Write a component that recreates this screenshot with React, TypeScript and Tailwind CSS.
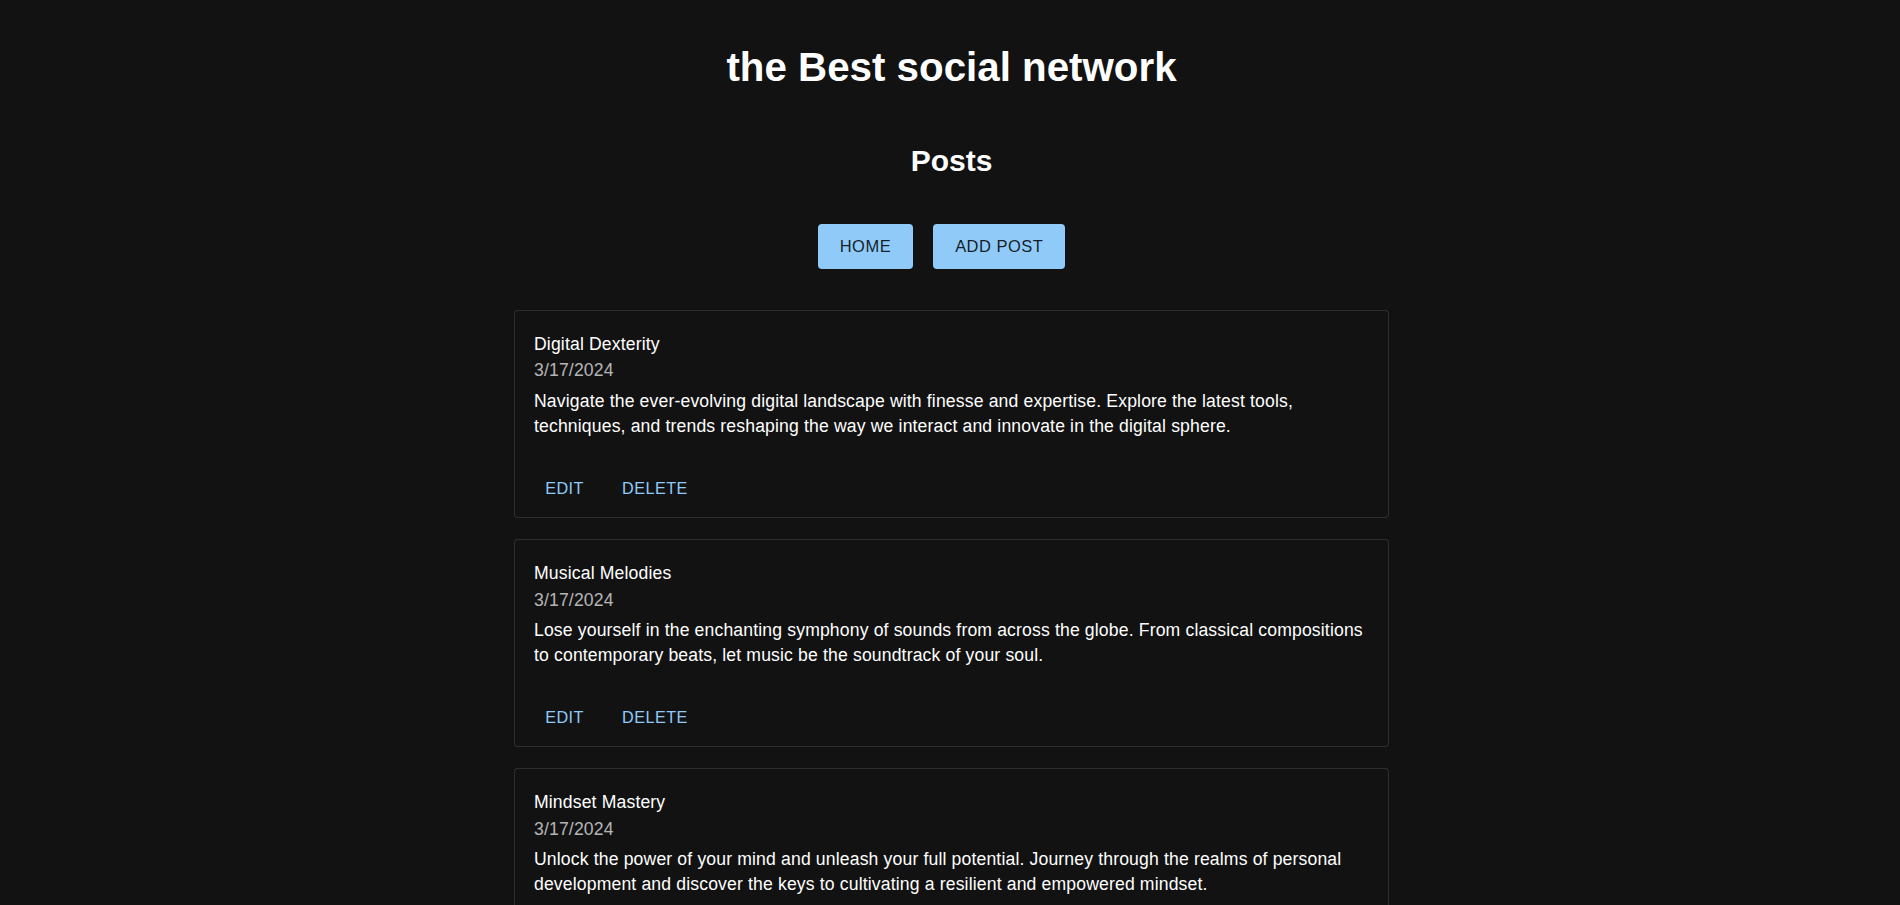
const posts = [
  {
    id: 1,
    title: 'Digital Dexterity',
    date: '3/17/2024',
    body: 'Navigate the ever-evolving digital landscape with finesse and expertise. Explore the latest tools, techniques, and trends reshaping the way we interact and innovate in the digital sphere.',
  },
  {
    id: 2,
    title: 'Musical Melodies',
    date: '3/17/2024',
    body: 'Lose yourself in the enchanting symphony of sounds from across the globe. From classical compositions to contemporary beats, let music be the soundtrack of your soul.',
  },
  {
    id: 3,
    title: 'Mindset Mastery',
    date: '3/17/2024',
    body: 'Unlock the power of your mind and unleash your full potential. Journey through the realms of personal development and discover the keys to cultivating a resilient and empowered mindset.',
  },
];

function PostCard({ title, date, body }: { title: string; date: string; body: string }) {
  return (
    <div className="w-[875px] rounded-[4px] border border-[rgba(255,255,255,0.12)] bg-[#121212]">
      <div className="pl-[19px] pr-[16px] pt-[20px] pb-[20px] tracking-[0.00938em]">
        <div className="text-[17.6px] leading-[26.4px] text-white">{title}</div>
        <div className="text-[17.6px] leading-[26.4px] text-[rgba(255,255,255,0.7)]">{date}</div>
        <p className="mt-[5px] text-[17.6px] leading-[25.2px] text-white">{body}</p>
      </div>
      <div className="flex items-center gap-[17.5px] pl-[17.5px] pt-[9px] pb-[9px]">
        <button className="min-w-[64px] px-[8px] py-[6px] rounded-[4px] text-[16.2px] leading-[28px] uppercase tracking-[0.02857em] text-[#90caf9] hover:bg-[rgba(144,202,249,0.08)] cursor-pointer">
          Edit
        </button>
        <button className="min-w-[64px] px-[8px] py-[6px] rounded-[4px] text-[16.2px] leading-[28px] uppercase tracking-[0.02857em] text-[#90caf9] hover:bg-[rgba(144,202,249,0.08)] cursor-pointer">
          Delete
        </button>
      </div>
    </div>
  );
}

export default function App() {
  return (
    <div className="min-h-screen bg-[#121212] text-white font-['Liberation_Sans',Arial,sans-serif] pl-[3px] pb-10">
      <h1 className="pt-[45px] text-center text-[40.3px] leading-[46px] font-bold">the Best social network</h1>
      <h2 className="mt-[53px] text-center text-[30px] leading-[34px] font-bold">Posts</h2>
      <div className="mt-[46px] flex justify-center gap-[20px] pr-[20px]">
        <button className="rounded-[4px] bg-[#90caf9] px-[22px] py-[8px] text-[16.5px] leading-[28.9px] uppercase tracking-[0.02857em] text-[rgba(0,0,0,0.87)] cursor-pointer hover:bg-[#42a5f5]">
          Home
        </button>
        <button className="rounded-[4px] bg-[#90caf9] px-[22px] py-[8px] text-[16.5px] leading-[28.9px] uppercase tracking-[0.02857em] text-[rgba(0,0,0,0.87)] cursor-pointer hover:bg-[#42a5f5]">
          Add Post
        </button>
      </div>
      <div className="mt-[41px] flex flex-col items-center gap-[21px]">
        {posts.map((p) => (
          <PostCard key={p.id} title={p.title} date={p.date} body={p.body} />
        ))}
      </div>
    </div>
  );
}
